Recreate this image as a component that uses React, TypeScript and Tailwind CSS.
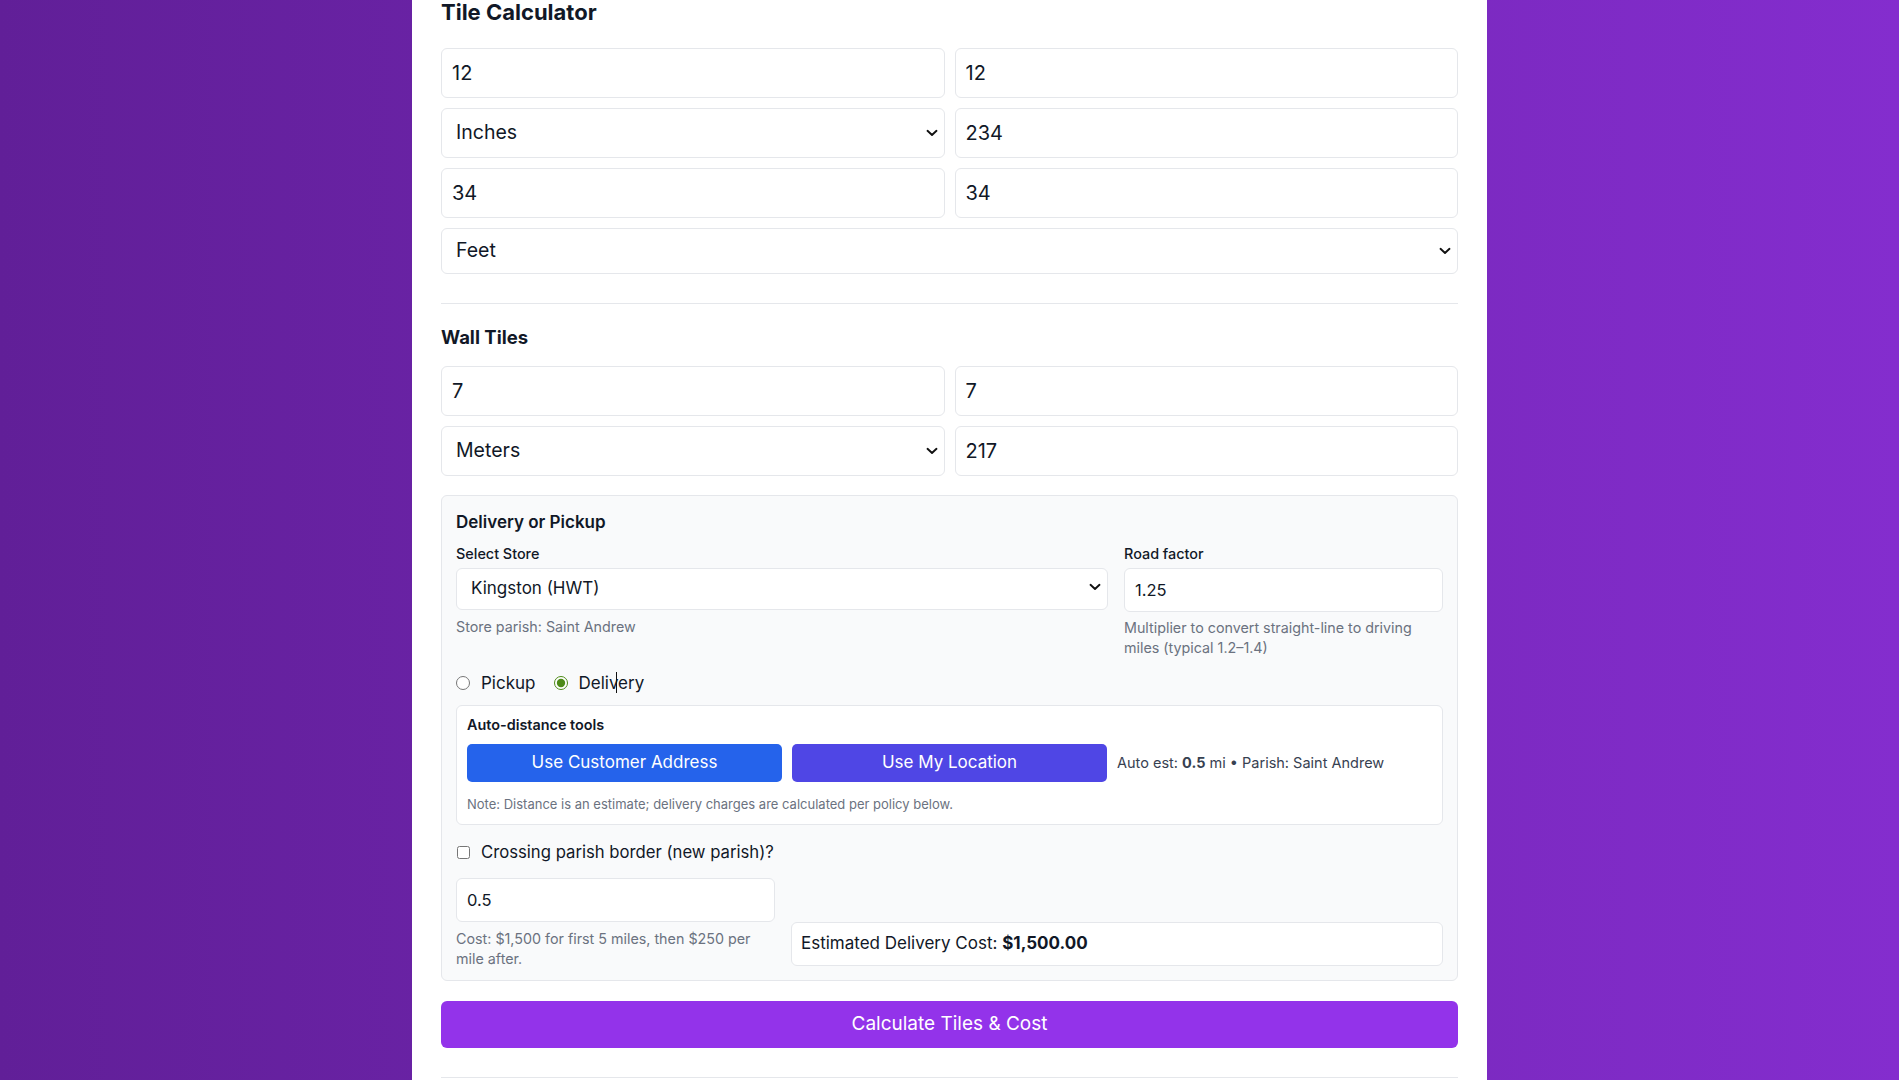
import * as React from 'react'

// Shared field styles
const fieldBase =
  'w-full rounded-md border border-[#e5e7eb] bg-white px-[10px] text-[#111827] outline-none'

function TextField({ value, className = '' }: { value: string; className?: string }) {
  return <input type="text" defaultValue={value} className={`${fieldBase} ${className}`} />
}

// Native select with the arrow drawn by us so it sits where the design has it
function SelectField({
  value,
  options,
  className = '',
  wrapClass = '',
}: {
  value: string
  options: string[]
  className?: string
  wrapClass?: string
}) {
  return (
    <div className={`relative ${wrapClass}`}>
      <select defaultValue={value} className={`${fieldBase} appearance-none pl-[14px] ${className}`}>
        {options.map((o) => (
          <option key={o}>{o}</option>
        ))}
      </select>
      <svg
        className="pointer-events-none absolute top-1/2 right-[7px] -translate-y-1/2"
        width="12"
        height="8"
        viewBox="0 0 12 8"
        fill="none"
      >
        <path d="M1.5 1.8 L6 6 L10.5 1.8" stroke="#111" strokeWidth="1.9" strokeLinecap="round" strokeLinejoin="round" />
      </svg>
    </div>
  )
}

const UNITS = ['Inches', 'Feet', 'Meters', 'Centimeters']

export default function App() {
  return (
    <div className="min-h-screen w-full bg-gradient-to-r from-[#611f98] to-[#842dce] font-['Inter',sans-serif] text-[#111827]">
      <div className="mx-auto flex min-h-[1080px] w-[1075px] flex-col bg-white px-[29px]">
        <h2 className="-mt-[2px] text-[22px] leading-[28px] font-bold">Tile Calculator</h2>

        {/* Floor tiles */}
        <div className="mt-[22px] grid grid-cols-2 gap-[10px]">
          <TextField value="12" className="h-[50px] text-[20px]" />
          <TextField value="12" className="h-[50px] text-[20px]" />
          <SelectField value="Inches" options={UNITS} className="h-[50px] text-[19.5px]" />
          <TextField value="234" className="h-[50px] text-[20px]" />
          <TextField value="34" className="h-[50px] text-[20px]" />
          <TextField value="34" className="h-[50px] text-[20px]" />
          <SelectField
            value="Feet"
            options={UNITS}
            wrapClass="col-span-2"
            className="h-[46px] text-[19.5px]"
          />
        </div>

        <div className="mt-[29px] border-t border-[#e5e7eb]" />

        {/* Wall tiles */}
        <h3 className="mt-[19px] text-[18.5px] leading-[28px] font-bold">Wall Tiles</h3>
        <div className="mt-[15px] grid grid-cols-2 gap-[10px]">
          <TextField value="7" className="h-[50px] text-[20px]" />
          <TextField value="7" className="h-[50px] text-[20px]" />
          <SelectField value="Meters" options={UNITS} className="h-[50px] text-[19.5px]" />
          <TextField value="217" className="h-[50px] text-[20px]" />
        </div>

        {/* Delivery or pickup */}
        <div className="mt-[19px] rounded-md border border-[#e5e7eb] bg-[#f9fafb] px-[14px] pt-[14px] pb-[12px]">
          <h4 className="text-[17px] leading-[24px] font-semibold">Delivery or Pickup</h4>

          <div className="mt-[10px] grid grid-cols-[1fr_319px] gap-x-[16px]">
            <div>
              <label className="block text-[14.4px] leading-[20px] font-medium">Select Store</label>
              <SelectField
                value="Kingston (HWT)"
                options={['Kingston (HWT)', 'Portmore', 'Spanish Town', 'Montego Bay']}
                className="mt-[4px] h-[42px] text-[17px]"
              />
              <p className="mt-[7px] text-[14.3px] leading-[19.5px] text-[#6b7280]">
                Store parish: Saint Andrew
              </p>
            </div>
            <div>
              <label className="block text-[14.4px] leading-[20px] font-medium">Road factor</label>
              <TextField value="1.25" className="mt-[4px] h-[44px] text-[16.5px]" />
              <p className="mt-[6px] text-[14.3px] leading-[19.5px] text-[#6b7280]">
                Multiplier to convert straight-line to driving miles (typical 1.2–1.4)
              </p>
            </div>
          </div>

          <div className="mt-[14px] flex items-center text-[17px] leading-[24px]">
            <label className="flex items-center gap-[11px]">
              <input type="radio" name="mode" className="m-0 h-[14px] w-[14px] accent-[#4d8a17]" />
              <span>Pickup</span>
            </label>
            <label className="ml-[19px] flex items-center gap-[10px]">
              <input
                type="radio"
                name="mode"
                defaultChecked
                className="m-0 h-[14px] w-[14px] accent-[#4d8a17]"
              />
              <span className="relative">
                Delivery
                {/* mouse I-beam over the label */}
                <span className="pointer-events-none absolute top-[1px] left-[38px] h-[21px] w-px bg-[#111]" />
              </span>
            </label>
          </div>

          <div className="mt-[10px] rounded-md border border-[#e5e7eb] bg-white px-[10px] pt-[10px] pb-[11px]">
            <div className="text-[14.4px] leading-[18px] font-semibold">Auto-distance tools</div>
            <div className="mt-[10px] grid grid-cols-3 items-center gap-[10px]">
              <button className="h-[38px] rounded-[5px] bg-[#2563eb] text-[17px] text-white">
                Use Customer Address
              </button>
              <button className="h-[38px] rounded-[5px] bg-[#4f46e5] text-[17px] text-white">
                Use My Location
              </button>
              <div className="text-[14.5px] whitespace-nowrap text-[#374151]">
                Auto est: <span className="font-bold">0.5</span> mi • Parish: Saint Andrew
              </div>
            </div>
            <p className="mt-[14px] text-[13px] leading-[17px] text-[#6b7280]">
              Note: Distance is an estimate; delivery charges are calculated per policy below.
            </p>
          </div>

          <label className="mt-[15px] flex items-center gap-[11px] text-[16.7px] leading-[24px]">
            <input type="checkbox" className="m-0 ml-[1px] h-[13px] w-[13px]" />
            <span>Crossing parish border (new parish)?</span>
          </label>

          <div className="mt-[14px] grid grid-cols-[319px_1fr] items-end gap-x-[16px]">
            <div>
              <TextField value="0.5" className="h-[44px] text-[16.5px]" />
              <p className="mt-[7px] text-[14.3px] leading-[19.5px] text-[#6b7280]">
                Cost: $1,500 for first 5 miles, then $250 per mile after.
              </p>
            </div>
            <div className="mb-[2px] flex h-[44px] items-center rounded-md border border-[#e5e7eb] bg-white px-[9px] text-[17px]">
              <span>
                Estimated Delivery Cost: <span className="font-bold">$1,500.00</span>
              </span>
            </div>
          </div>
        </div>

        <button className="mt-[20px] h-[47px] w-full rounded-md bg-[#9333ea] text-[19px] text-white">
          Calculate Tiles &amp; Cost
        </button>

        <div className="mt-[29px] border-t border-[#e5e7eb]" />
      </div>
    </div>
  )
}
